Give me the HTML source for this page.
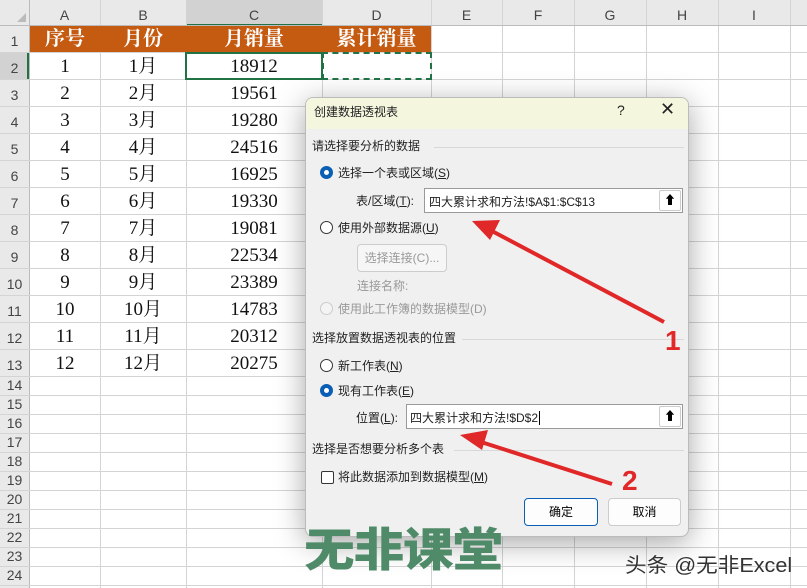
<!DOCTYPE html>
<html><head><meta charset="utf-8"><style>
*{margin:0;padding:0;box-sizing:border-box}
body{width:807px;height:588px;overflow:hidden;background:#fff;position:relative;font-family:"Liberation Sans","Noto Sans CJK SC",sans-serif}
.a{position:absolute}
.hl{position:absolute;left:0;width:807px;height:1px;background:#d4d4d4}
.vl{position:absolute;top:0;height:588px;width:1px;background:#d4d4d4}
.ch{position:absolute;top:0;height:26px;line-height:30px;text-align:center;font-size:14px;color:#444}
.rh{position:absolute;left:0;width:29px;text-align:center;font-size:14px;color:#444}
.c{position:absolute;text-align:center;font-family:"Liberation Serif","Noto Serif CJK SC",serif;font-size:19px;color:#111}
.d{font-size:12px;color:#222;position:absolute;white-space:nowrap}
.rad{position:absolute;width:13px;height:13px;border:1px solid #333;border-radius:50%;background:#fff}
.rad.on{border:4px solid #0a5fb4}
.sep{position:absolute;height:1px;background:#d8d8d8}
.inp{position:absolute;background:#fff;border:1px solid #999;height:25px}
.up{position:absolute;right:1px;top:1px;width:22px;height:21px;border:1px solid #ccc;border-radius:2px;font-size:12px;text-align:center;line-height:19px;font-weight:bold}
.btn{position:absolute;background:#fdfdfd;border:1px solid #ccc;border-radius:4px;text-align:center;line-height:26px;font-size:12px}
</style></head><body>
<div class="a" style="left:0;top:0;width:807px;height:26px;background:#e9e9e9"></div>
<div class="a" style="left:0;top:0;width:29px;height:588px;background:#e9e9e9"></div>
<div class="a" style="left:186px;top:0;width:136px;height:26px;background:#d2d2d2;border-bottom:2px solid #217346"></div>
<div class="a" style="left:17px;top:13px;width:0;height:0;border-left:9px solid transparent;border-bottom:9px solid #bbb"></div>
<div class="vl" style="left:29px;background:#bbb"></div>
<div class="vl" style="left:100px"></div><div class="vl" style="left:186px"></div><div class="vl" style="left:322px"></div><div class="vl" style="left:431px"></div><div class="vl" style="left:502px"></div><div class="vl" style="left:574px"></div><div class="vl" style="left:646px"></div><div class="vl" style="left:718px"></div><div class="vl" style="left:790px"></div>
<div class="hl" style="top:25px;background:#bbb"></div>
<div class="hl" style="top:52px"></div><div class="hl" style="top:79px"></div><div class="hl" style="top:106px"></div><div class="hl" style="top:133px"></div><div class="hl" style="top:160px"></div><div class="hl" style="top:187px"></div><div class="hl" style="top:214px"></div><div class="hl" style="top:241px"></div><div class="hl" style="top:268px"></div><div class="hl" style="top:295px"></div><div class="hl" style="top:322px"></div><div class="hl" style="top:349px"></div><div class="hl" style="top:376px"></div><div class="hl" style="top:395px"></div><div class="hl" style="top:414px"></div><div class="hl" style="top:433px"></div><div class="hl" style="top:452px"></div><div class="hl" style="top:471px"></div><div class="hl" style="top:490px"></div><div class="hl" style="top:509px"></div><div class="hl" style="top:528px"></div><div class="hl" style="top:547px"></div><div class="hl" style="top:566px"></div><div class="hl" style="top:585px"></div>
<div class="ch" style="left:29px;width:71px">A</div><div class="ch" style="left:100px;width:86px">B</div><div class="ch" style="left:186px;width:136px">C</div><div class="ch" style="left:322px;width:109px">D</div><div class="ch" style="left:431px;width:71px">E</div><div class="ch" style="left:502px;width:72px">F</div><div class="ch" style="left:574px;width:72px">G</div><div class="ch" style="left:646px;width:72px">H</div><div class="ch" style="left:718px;width:72px">I</div>
<div class="rh" style="top:33px">1</div><div class="rh" style="top:87px">3</div><div class="rh" style="top:114px">4</div><div class="rh" style="top:141px">5</div><div class="rh" style="top:168px">6</div><div class="rh" style="top:195px">7</div><div class="rh" style="top:222px">8</div><div class="rh" style="top:249px">9</div><div class="rh" style="top:276px">10</div><div class="rh" style="top:303px">11</div><div class="rh" style="top:330px">12</div><div class="rh" style="top:357px">13</div>
<div class="rh" style="top:377px">14</div><div class="rh" style="top:396px">15</div><div class="rh" style="top:415px">16</div><div class="rh" style="top:434px">17</div><div class="rh" style="top:453px">18</div><div class="rh" style="top:472px">19</div><div class="rh" style="top:491px">20</div><div class="rh" style="top:510px">21</div><div class="rh" style="top:529px">22</div><div class="rh" style="top:548px">23</div><div class="rh" style="top:567px">24</div>
<div class="a" style="left:0;top:53px;width:29px;height:26px;background:#d2d2d2;border-right:2px solid #217346"></div><div class="rh" style="top:60px">2</div>
<div class="a" style="left:30px;top:26px;width:401px;height:26px;background:#c55a11"></div>
<div class="c" style="left:30px;top:26px;width:70px;line-height:27px;color:#fff;font-weight:bold;font-size:20px">序号</div>
<div class="c" style="left:100px;top:26px;width:86px;line-height:27px;color:#fff;font-weight:bold;font-size:20px">月份</div>
<div class="c" style="left:186px;top:26px;width:136px;line-height:27px;color:#fff;font-weight:bold;font-size:20px">月销量</div>
<div class="c" style="left:322px;top:26px;width:109px;line-height:27px;color:#fff;font-weight:bold;font-size:20px">累计销量</div>
<div id="data"></div>
<div class="a" style="left:185px;top:52px;width:138px;height:28px;border:2px solid #217346"></div>
<div class="a" style="left:322px;top:52px;width:110px;height:28px;border:2px dashed #217346"></div>
<div class="a" style="left:305px;top:97px;width:384px;height:440px;border-radius:8px;box-shadow:0 6px 30px rgba(0,0,0,.35);background:#f0f0f0;border:1px solid #bbb;overflow:hidden">
 <div class="a" style="left:0;top:0;width:384px;height:31px;background:#f4f7de"></div>
 <div class="d" style="left:8px;top:5px">创建数据透视表</div>
 <div class="d" style="left:311px;top:4px;font-size:14px">?</div>
 <div class="d" style="left:354px;top:1px;font-size:18px;font-weight:300">✕</div>
 <div class="d" style="left:6px;top:39px">请选择要分析的数据</div><div class="sep" style="left:128px;top:49px;width:250px"></div>
 <div class="rad on" style="left:14px;top:68px"></div><div class="d" style="left:32px;top:66px">选择一个表或区域(<u>S</u>)</div>
 <div class="d" style="left:50px;top:94px">表/区域(<u>T</u>):</div>
 <div class="inp" style="left:118px;top:90px;width:259px"><div class="d" style="left:4px;top:4px">四大累计求和方法!$A$1:$C$13</div><div class="up">⬆</div></div>
 <div class="rad" style="left:14px;top:123px"></div><div class="d" style="left:32px;top:121px">使用外部数据源(<u>U</u>)</div>
 <div class="btn" style="left:51px;top:146px;width:90px;height:28px;color:#999;background:#f6f6f6">选择连接(C)...</div>
 <div class="d" style="left:51px;top:179px;color:#999">连接名称:</div>
 <div class="rad" style="left:14px;top:204px;border-color:#ccc;background:#f4f4f4"></div><div class="d" style="left:32px;top:202px;color:#999">使用此工作簿的数据模型(D)</div>
 <div class="d" style="left:6px;top:231px">选择放置数据透视表的位置</div><div class="sep" style="left:156px;top:241px;width:222px"></div>
 <div class="rad" style="left:14px;top:261px"></div><div class="d" style="left:32px;top:259px">新工作表(<u>N</u>)</div>
 <div class="rad on" style="left:14px;top:286px"></div><div class="d" style="left:32px;top:284px">现有工作表(<u>E</u>)</div>
 <div class="d" style="left:50px;top:311px">位置(<u>L</u>):</div>
 <div class="inp" style="left:100px;top:306px;width:277px"><div class="d" style="left:3px;top:4px">四大累计求和方法!$D$2<span style="border-left:1px solid #000;margin-left:1px"></span></div><div class="up">⬆</div></div>
 <div class="d" style="left:6px;top:342px">选择是否想要分析多个表</div><div class="sep" style="left:148px;top:352px;width:230px"></div>
 <div class="a" style="left:15px;top:373px;width:13px;height:13px;border:1px solid #333;border-radius:2px;background:#fff"></div><div class="d" style="left:32px;top:370px">将此数据添加到数据模型(<u>M</u>)</div>
 <div class="btn" style="left:218px;top:400px;width:74px;height:28px;border-color:#0a5fb4">确定</div>
 <div class="btn" style="left:302px;top:400px;width:73px;height:28px">取消</div>
</div>
<svg class="a" style="left:0;top:0" width="807" height="588">
 <line x1="664" y1="322" x2="490" y2="230" stroke="#e02828" stroke-width="4"/>
 <polygon points="472,221 500,220 490,240" fill="#e02828"/>
 <line x1="612" y1="484" x2="478" y2="441" stroke="#e02828" stroke-width="4"/>
 <polygon points="460,435 488,430 482,450" fill="#e02828"/>
 <text x="665" y="350" fill="#e02828" font-size="28" font-weight="bold" font-family="Liberation Sans">1</text>
 <text x="622" y="490" fill="#e02828" font-size="28" font-weight="bold" font-family="Liberation Sans">2</text>
</svg>
<div class="a" style="left:304px;top:519px;font-size:46px;font-weight:900;color:#4f8b68;letter-spacing:-1px;line-height:56px;font-family:'Noto Sans CJK SC',sans-serif;transform:scaleX(1.1);transform-origin:left">无非课堂</div>
<div class="a" style="left:625px;top:549px;font-size:20px;color:#333;text-shadow:0 0 3px #fff;transform:scaleX(1.08);transform-origin:left">头条 @无非Excel</div>
<script>
var m=[18912,19561,19280,24516,16925,19330,19081,22534,23389,14783,20312,20275],h='';
for(var i=0;i<12;i++){var t=52+i*27;h+='<div class="c" style="left:30px;top:'+t+'px;width:70px;line-height:29px">'+(i+1)+'</div><div class="c" style="left:100px;top:'+t+'px;width:86px;line-height:29px">'+(i+1)+'月</div><div class="c" style="left:186px;top:'+t+'px;width:136px;line-height:29px">'+m[i]+'</div>';}
document.getElementById('data').innerHTML=h;
</script>
</body></html>
